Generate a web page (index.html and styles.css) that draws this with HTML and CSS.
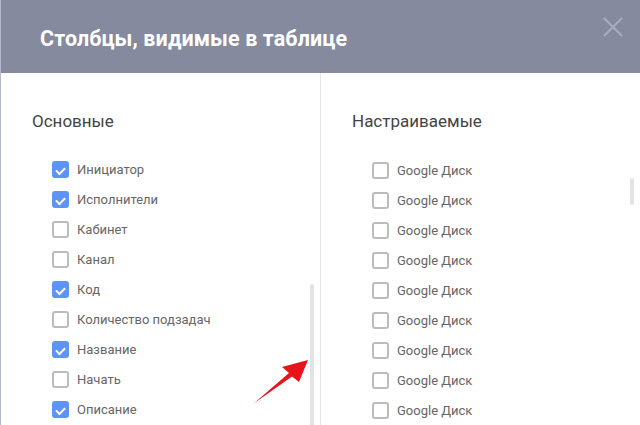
FILE: index.html
```html
<!DOCTYPE html>
<html lang="ru">
<head>
    <meta charset="UTF-8">
    <title>Столбцы</title>
    <link rel="stylesheet" href="styles.css">
</head>
<body>
    <div class="modal">
        <header class="modal-header">
            <h1>Столбцы, видимые в таблице</h1>
            <button class="close" aria-label="Закрыть">
                <svg width="20" height="20" viewBox="0 0 20 20"><path d="M1 1L19 19M19 1L1 19" stroke="#a9adbc" stroke-width="2" fill="none"/></svg>
            </button>
        </header>
        <div class="modal-body">
            <section class="col col-left">
                <h2>Основные</h2>
                <ul class="checks">
                    <li><span class="box on"></span>Инициатор</li>
                    <li><span class="box on"></span>Исполнители</li>
                    <li><span class="box"></span>Кабинет</li>
                    <li><span class="box"></span>Канал</li>
                    <li><span class="box on"></span>Код</li>
                    <li><span class="box"></span>Количество подзадач</li>
                    <li><span class="box on"></span>Название</li>
                    <li><span class="box"></span>Начать</li>
                    <li><span class="box on"></span>Описание</li>
                </ul>
                <div class="thumb thumb-left"></div>
            </section>
            <section class="col col-right">
                <h2>Настраиваемые</h2>
                <ul class="checks">
                    <li><span class="box"></span>Google Диск</li>
                    <li><span class="box"></span>Google Диск</li>
                    <li><span class="box"></span>Google Диск</li>
                    <li><span class="box"></span>Google Диск</li>
                    <li><span class="box"></span>Google Диск</li>
                    <li><span class="box"></span>Google Диск</li>
                    <li><span class="box"></span>Google Диск</li>
                    <li><span class="box"></span>Google Диск</li>
                    <li><span class="box"></span>Google Диск</li>
                </ul>
                <div class="thumb thumb-right"></div>
            </section>
        </div>
        <svg class="arrow" width="70" height="60" viewBox="0 0 70 60">
            <path d="M4 57 L40 26 L33 20 L59 13 L50 35 L43 29.5 Z" fill="#e8141a"/>
        </svg>
    </div>
</body>
</html>
```

FILE: styles.css
```css
body {
    margin: 0;
    font-family: Roboto, "Noto Sans", sans-serif;
    background: #fff;
}

.modal {
    position: relative;
    width: 640px;
    height: 425px;
    overflow: hidden;
    box-sizing: border-box;
    border-left: 1px solid #b4b9c9;
}

.modal-header {
    height: 73px;
    background: #868a9f;
    display: flex;
    align-items: center;
    padding: 4px 0 0 39px;
    box-sizing: border-box;
}

.modal-header h1 {
    margin: 0;
    color: #fff;
    font-size: 21.5px;
    font-weight: 700;
    letter-spacing: 0.1px;
}

.close {
    position: absolute;
    top: 17px;
    right: 17px;
    width: 20px;
    height: 20px;
    padding: 0;
    border: none;
    background: none;
}

.modal-body {
    display: flex;
    height: 352px;
}

.col {
    position: relative;
    padding-top: 36px;
    box-sizing: border-box;
}

.col-left {
    width: 320px;
    padding-left: 31px;
    border-right: 1px solid #e6e6e6;
}

.col-right {
    flex: 1;
    padding-left: 31px;
}

.col h2 {
    margin: 0 0 22px;
    font-size: 17px;
    line-height: 24px;
    font-weight: 400;
    color: #444;
}

.checks {
    list-style: none;
    margin: 0;
    padding: 0 0 0 20px;
}

.col-left .checks {
    margin-top: -1px;
}

.checks li {
    display: flex;
    align-items: center;
    gap: 8px;
    height: 30px;
    font-size: 13px;
    color: #666;
}

.box {
    width: 17px;
    height: 17px;
    box-sizing: border-box;
    border: 2px solid #bcbcbc;
    border-radius: 3px;
    flex-shrink: 0;
    position: relative;
}

.box.on {
    background: #5e93f7;
    border-color: #5e93f7;
}

.box.on::after {
    content: "";
    position: absolute;
    left: 3px;
    top: 1px;
    width: 7px;
    height: 4px;
    border-left: 2px solid #fff;
    border-bottom: 2px solid #fff;
    transform: translate(-1px, 3px) rotate(-45deg);
}

.thumb {
    position: absolute;
    width: 4px;
    background: #e3e3e3;
    border-radius: 2px;
}

.thumb-left {
    right: 6px;
    top: 211px;
    height: 160px;
}

.thumb-right {
    right: 6px;
    top: 105px;
    height: 27px;
}

.arrow {
    position: absolute;
    left: 248px;
    top: 347px;
}
```
